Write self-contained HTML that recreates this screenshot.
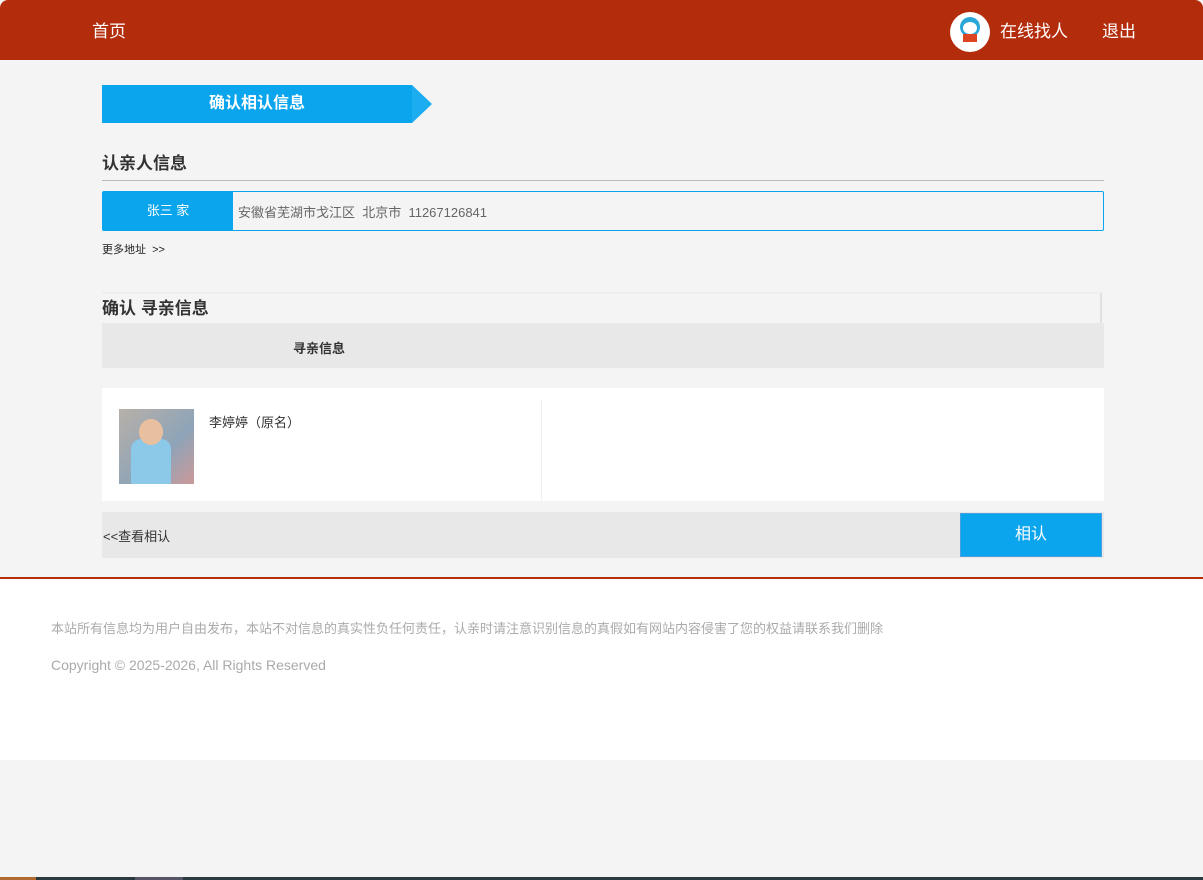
<!DOCTYPE html>
<html><head><meta charset="utf-8"><style>
*{margin:0;padding:0;box-sizing:border-box}
body{width:1203px;height:880px;background:#f4f4f4;font-family:"Liberation Sans","Noto Sans CJK SC",sans-serif;position:relative;overflow:hidden;color:#333}
.hdr{position:absolute;left:0;top:0;width:1203px;height:60px;background:#b32c0b;border-radius:8px 8px 0 0;color:#fff;font-size:17px}
.abs{position:absolute}
</style></head><body>
<div class="hdr">
<div class="abs" style="left:92px;top:17px">首页</div>
<div class="abs" style="left:950px;top:12px;width:40px;height:40px;border-radius:50%;background:#fff;overflow:hidden">
<div class="abs" style="left:10px;top:5px;width:20px;height:20px;border-radius:50%;background:#2aa7d8"></div>
<div class="abs" style="left:13px;top:10px;width:14px;height:12px;border-radius:50%;background:#fff"></div>
<div class="abs" style="left:13px;top:22px;width:14px;height:8px;background:#d42;"></div>
</div>
<div class="abs" style="left:1000px;top:17px">在线找人</div>
<div class="abs" style="left:1102px;top:17px">退出</div>
</div>
<div class="abs" style="left:102px;top:85px;width:310px;height:38px;background:#0ba5ee;color:#fff;font-weight:bold;font-size:16px;text-align:center;line-height:38px">确认相认信息</div>
<div class="abs" style="left:412px;top:85px;width:0;height:0;border-top:19px solid transparent;border-bottom:19px solid transparent;border-left:20px solid #1cacf0"></div>
<div class="abs" style="left:102px;top:149px;font-size:17px;font-weight:bold">认亲人信息</div>
<div class="abs" style="left:102px;top:180px;width:1002px;height:1px;background:#bbb"></div>
<div class="abs" style="left:102px;top:191px;width:1002px;height:40px;border:1px solid #0ba5ee;border-radius:2px;background:#f4f4f4">
<div class="abs" style="left:0;top:0;width:130px;height:38px;background:#0ba5ee;color:#fff;font-size:13px;text-align:center;line-height:38px">张三 家</div>
<div class="abs" style="left:135px;top:10px;font-size:13px;color:#666">安徽省芜湖市戈江区&nbsp; 北京市&nbsp; 11267126841</div>
</div>
<div class="abs" style="left:102px;top:241px;font-size:11px;color:#222">更多地址 &nbsp;&gt;&gt;</div>
<div class="abs" style="left:102px;top:292px;width:1000px;height:32px;border-top:2px solid #eee;border-right:2px solid #e0e0e0"></div>
<div class="abs" style="left:102px;top:294px;font-size:17px;font-weight:bold">确认 寻亲信息</div>
<div class="abs" style="left:102px;top:323px;width:1002px;height:45px;background:#e8e8e8"></div>
<div class="abs" style="left:293px;top:338px;font-size:13px;font-weight:bold">寻亲信息</div>
<div class="abs" style="left:102px;top:388px;width:1002px;height:113px;background:#fff"></div>
<div class="abs" style="left:541px;top:399px;width:1px;height:102px;background:#f0f0f0"></div>
<div class="abs" style="left:119px;top:409px;width:75px;height:75px;background:linear-gradient(135deg,#b8b0a8,#8ea4b8 60%,#c99 100%)"><div class="abs" style="left:12px;top:30px;width:40px;height:45px;background:#8cc8e8;border-radius:10px 10px 0 0"></div><div class="abs" style="left:20px;top:10px;width:24px;height:26px;background:#e8c0a0;border-radius:50%"></div></div>
<div class="abs" style="left:209px;top:412px;font-size:13px">李婷婷（原名）</div>
<div class="abs" style="left:102px;top:512px;width:1002px;height:46px;background:#e8e8e8"></div>
<div class="abs" style="left:103px;top:526px;font-size:13px">&lt;&lt;查看相认</div>
<div class="abs" style="left:960px;top:513px;width:142px;height:44px;background:#0ba5ee;border:1px solid #4aa0e0;color:#fff;font-size:16px;text-align:center;line-height:42px">相认</div>
<div class="abs" style="left:0;top:577px;width:1203px;height:183px;background:#fff;border-top:2px solid #b32c0b"></div>
<div class="abs" style="left:51px;top:618px;font-size:13px;color:#aaa;white-space:nowrap">本站所有信息均为用户自由发布，本站不对信息的真实性负任何责任，认亲时请注意识别信息的真假如有网站内容侵害了您的权益请联系我们删除</div>
<div class="abs" style="left:51px;top:657px;font-size:14px;color:#aaa">Copyright © 2025-2026, All Rights Reserved</div>
<div class="abs" style="left:0;top:877px;width:1203px;height:3px;background:#2a3a40"></div>
<div class="abs" style="left:0;top:877px;width:36px;height:3px;background:#b06a30"></div>
<div class="abs" style="left:135px;top:877px;width:48px;height:3px;background:#556"></div>
</body></html>
